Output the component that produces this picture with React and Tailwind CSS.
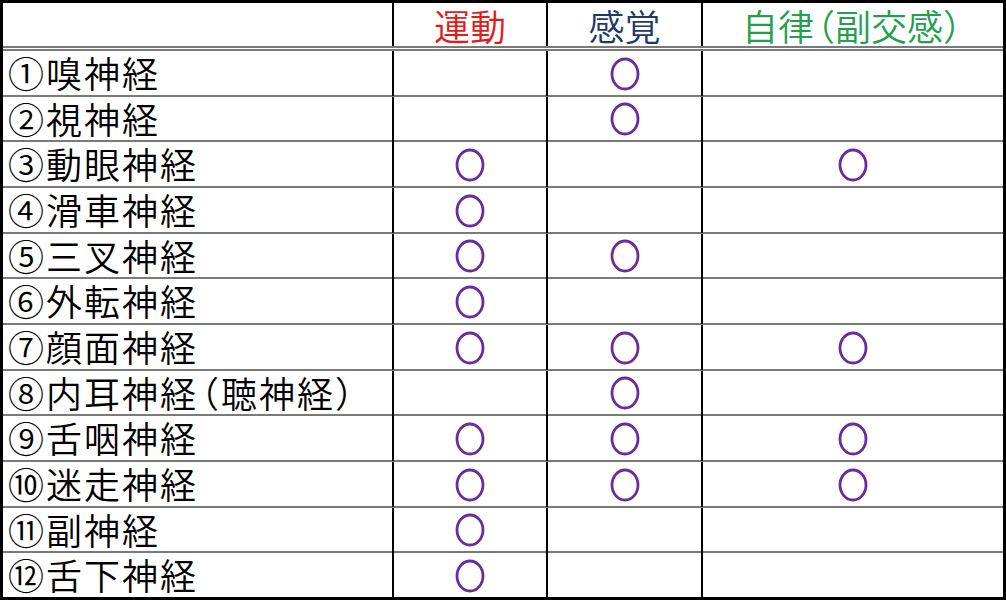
import React from "react";

const rows = [
  { label: "①嗅神経", m: false, s: true, a: false },
  { label: "②視神経", m: false, s: true, a: false },
  { label: "③動眼神経", m: true, s: false, a: true },
  { label: "④滑車神経", m: true, s: false, a: false },
  { label: "⑤三叉神経", m: true, s: true, a: false },
  { label: "⑥外転神経", m: true, s: false, a: false },
  { label: "⑦顔面神経", m: true, s: true, a: true },
  { label: "⑧内耳神経", paren: "聴神経", m: false, s: true, a: false },
  { label: "⑨舌咽神経", m: true, s: true, a: true },
  { label: "⑩迷走神経", m: true, s: true, a: true },
  { label: "⑪副神経", m: true, s: false, a: false },
  { label: "⑫舌下神経", m: true, s: false, a: false },
];

const font = { fontFamily: '"Noto Sans CJK JP", sans-serif' };

// ○ mark drawn as an ellipse
const Mark = () => (
  <svg width="30" height="34" viewBox="0 0 30 34">
    <ellipse cx="15" cy="17" rx="13" ry="15" fill="none" stroke="#6a2c9c" strokeWidth="2.8" />
  </svg>
);

// full-width parens squeezed to a narrow advance
const Open = () => <span className="inline-block ml-[-15px]">（</span>;
const Close = () => <span className="inline-block mr-[-15px]">）</span>;

const Cell = ({ children, last, className = "" }) => (
  <div className={`flex items-center whitespace-nowrap ${last ? "" : "border-r-2 border-black"} ${className}`}>
    {children}
  </div>
);

export default function App() {
  return (
    <div
      className="w-[1006px] h-[600px] bg-white border-[3px] border-black flex flex-col text-[36px] leading-[42px] font-[350] text-black"
      style={font}
    >
      {/* 見出し */}
      <div className="grid grid-cols-[391px_154px_155px_1fr] h-[48px] border-b-[5px] border-double border-[#7a7a7a] shrink-0">
        <Cell />
        <Cell className="justify-center text-[#e31b1b]">運動</Cell>
        <Cell className="justify-center text-[#1f3864]">感覚</Cell>
        <Cell last className="justify-center text-[#23a04e]">
          自律<Open />副交感<Close />
        </Cell>
      </div>

      {rows.map((r, i) => (
        <div
          key={i}
          className={`grid grid-cols-[391px_154px_155px_1fr] flex-1 min-h-0 ${
            i === rows.length - 1 ? "" : "border-b-2 border-[#7a7a7a]"
          }`}
        >
          <Cell className="pl-[5px] pb-[3px] tracking-[2px]">
            {r.label}
            {r.paren && (
              <>
                <Open />
                {r.paren}
                <Close />
              </>
            )}
          </Cell>
          <Cell className="justify-center">{r.m && <Mark />}</Cell>
          <Cell className="justify-center">{r.s && <Mark />}</Cell>
          <Cell last className="justify-center">{r.a && <Mark />}</Cell>
        </div>
      ))}
    </div>
  );
}
